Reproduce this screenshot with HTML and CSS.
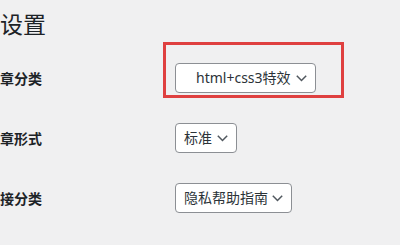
FILE: index.html
```html
<!DOCTYPE html>
<html lang="zh-CN">
<head>
<meta charset="utf-8">
<title>设置</title>
<link rel="stylesheet" href="styles.css">
</head>
<body>
<div class="wrap">
  <h1 class="title">设置</h1>
  <div class="form">
    <div class="row">
      <div class="label">章分类</div>
      <div class="field">
        <div class="select select-wide">
          <span class="value">html+css3特效</span>
          <svg class="chev" width="11" height="7" viewBox="0 0 11 7"><path d="M0.8 0.8 L5.5 5.5 L10.2 0.8" fill="none" stroke="#50575e" stroke-width="1.5"/></svg>
        </div>
        <div class="highlight"></div>
      </div>
    </div>
    <div class="row">
      <div class="label">章形式</div>
      <div class="field">
        <div class="select select-small">
          <span class="value">标准</span>
          <svg class="chev" width="11" height="7" viewBox="0 0 11 7"><path d="M0.8 0.8 L5.5 5.5 L10.2 0.8" fill="none" stroke="#50575e" stroke-width="1.5"/></svg>
        </div>
      </div>
    </div>
    <div class="row">
      <div class="label">接分类</div>
      <div class="field">
        <div class="select select-mid">
          <span class="value">隐私帮助指南</span>
          <svg class="chev" width="11" height="7" viewBox="0 0 11 7"><path d="M0.8 0.8 L5.5 5.5 L10.2 0.8" fill="none" stroke="#50575e" stroke-width="1.5"/></svg>
        </div>
      </div>
    </div>
  </div>
</div>
</body>
</html>
```

FILE: styles.css
```css
html, body {
  margin: 0;
  padding: 0;
  background: #f0f0f1;
}
body {
  width: 400px;
  height: 245px;
  overflow: hidden;
  font-family: "Noto Sans", "Noto Sans CJK SC", sans-serif;
  color: #1d2327;
}
.wrap {
  padding-top: 9px;
}
.title {
  margin: 0;
  font-size: 23px;
  font-weight: 400;
  line-height: 29px;
  color: #1d2327;
  font-family: "Noto Sans CJK SC", sans-serif;
}
.form {
  margin-top: 10px;
  display: flex;
  flex-direction: column;
}
.row {
  height: 60px;
  display: flex;
  align-items: center;
}
.label {
  width: 175px;
  flex: none;
  font-size: 14px;
  font-weight: 700;
  font-family: "Noto Sans CJK SC", sans-serif;
  line-height: 20px;
}
.field {
  position: relative;
}
.select {
  box-sizing: border-box;
  height: 30px;
  display: flex;
  align-items: center;
  background: #fff;
  border: 1px solid #8c8f94;
  border-radius: 4px;
  padding: 0 8px 0 8px;
  font-size: 14px;
  color: #2c3338;
}
.value {
  white-space: nowrap;
  line-height: 20px;
}
.chev {
  margin-left: auto;
  flex: none;
}
.select-wide {
  width: 141px;
  padding-left: 20px;
}
.select-small {
  width: 62px;
}
.select-mid {
  width: 117px;
}
.highlight {
  position: absolute;
  left: -12px;
  top: -21px;
  width: 181px;
  height: 56px;
  box-sizing: border-box;
  border: 3px solid #df4040;
}
```
